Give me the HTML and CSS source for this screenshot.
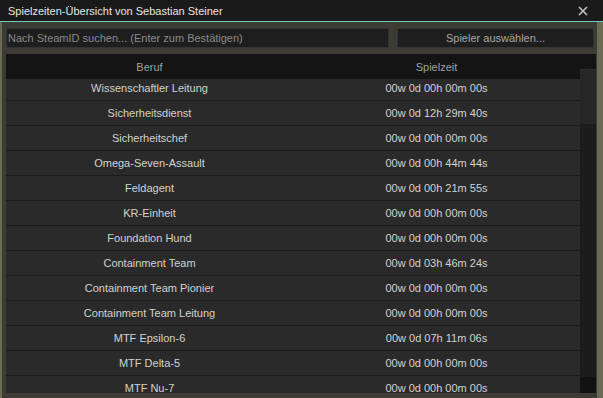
FILE: index.html
```html
<!DOCTYPE html>
<html lang="de">
<head>
  <meta charset="UTF-8" />
  <meta name="viewport" content="width=device-width, initial-scale=1.0" />
  <title>Spielzeiten-Übersicht</title>
  <link rel="stylesheet" href="styles.css">
</head>
<body>

  <div class="titlebar">
    <span class="title">Spielzeiten-Übersicht von Sebastian Steiner</span>
    <svg class="close" width="10" height="10" viewBox="0 0 10 10">
      <path d="M1 1 L9 9 M9 1 L1 9" stroke="#bdbdbd" stroke-width="1.7" />
    </svg>
  </div>

  <div class="panel">
    <div class="toolbar">
      <input class="search" type="text" placeholder="Nach SteamID suchen... (Enter zum Bestätigen)" />
      <button class="pick">Spieler auswählen...</button>
    </div>

    <div class="list">
      <div class="list-head">
        <div class="col">Beruf</div>
        <div class="col">Spielzeit</div>
      </div>
      <div class="list-body">
        <div class="rows">
          <div class="row"><div class="col">Wissenschaftler Leitung</div><div class="col">00w 0d 00h 00m 00s</div></div>
          <div class="row"><div class="col">Sicherheitsdienst</div><div class="col">00w 0d 12h 29m 40s</div></div>
          <div class="row"><div class="col">Sicherheitschef</div><div class="col">00w 0d 00h 00m 00s</div></div>
          <div class="row"><div class="col">Omega-Seven-Assault</div><div class="col">00w 0d 00h 44m 44s</div></div>
          <div class="row"><div class="col">Feldagent</div><div class="col">00w 0d 00h 21m 55s</div></div>
          <div class="row"><div class="col">KR-Einheit</div><div class="col">00w 0d 00h 00m 00s</div></div>
          <div class="row"><div class="col">Foundation Hund</div><div class="col">00w 0d 00h 00m 00s</div></div>
          <div class="row"><div class="col">Containment Team</div><div class="col">00w 0d 03h 46m 24s</div></div>
          <div class="row"><div class="col">Containment Team Pionier</div><div class="col">00w 0d 00h 00m 00s</div></div>
          <div class="row"><div class="col">Containment Team Leitung</div><div class="col">00w 0d 00h 00m 00s</div></div>
          <div class="row"><div class="col">MTF Epsilon-6</div><div class="col">00w 0d 07h 11m 06s</div></div>
          <div class="row"><div class="col">MTF Delta-5</div><div class="col">00w 0d 00h 00m 00s</div></div>
          <div class="row"><div class="col">MTF Nu-7</div><div class="col">00w 0d 00h 00m 00s</div></div>
        </div>
        <div class="scrollbar">
          <div class="grip"></div>
          <div class="track"></div>
          <div class="down"></div>
        </div>
      </div>
    </div>
  </div>

</body>
</html>
```

FILE: styles.css
```css
html, body {
  height: 100%;
}

body {
  margin: 0;
  font-family: 'Liberation Sans', Arial, sans-serif;
  font-size: 11px;
  background-color: #6c6a55;
  display: flex;
  flex-direction: column;
  overflow: hidden;
}

.titlebar {
  height: 21px;
  background-color: #1a1a1a;
  border-bottom: 1px solid #74c9b8;
  display: flex;
  align-items: center;
  justify-content: space-between;
  padding: 0 15px 0 8px;
  color: #e6e6e6;
}

.close {
  display: block;
}

.panel {
  flex: 1;
  margin: 0 6px 0 2px;
  background-color: #3c3c34;
  padding: 6px 1px 5px 4px;
  display: flex;
  flex-direction: column;
  min-height: 0;
}

.toolbar {
  display: flex;
  gap: 8px;
  margin-right: 2px;
  height: 20px;
}

.search,
.pick {
  box-sizing: border-box;
  height: 20px;
  margin: 0;
  border: 1px solid #343431;
  background-color: #1e1e1e;
  font-family: 'Liberation Sans', Arial, sans-serif;
  font-size: 11px;
  outline: none;
}

.search {
  width: 383px;
  padding: 0 1px;
  color: #8c8c8c;
}

.search::placeholder {
  color: #8a8a8a;
}

.pick {
  flex: 1;
  color: #a8a8a8;
  padding: 0;
}

.list {
  flex: 1;
  margin-top: 6px;
  display: flex;
  flex-direction: column;
  min-height: 0;
}

.list-head {
  height: 25px;
  background-color: #141414;
  color: #a0a0a0;
  display: flex;
  align-items: center;
  padding-right: 16px;
  flex-shrink: 0;
}

.col {
  flex: 1;
  text-align: center;
}

.list-body {
  flex: 1;
  display: flex;
  min-height: 0;
}

.rows {
  flex: 1;
  overflow: hidden;
}

.row {
  height: 24px;
  border-bottom: 1px solid #1b1b1b;
  background-color: #2a2a2a;
  color: #d2d2d2;
  display: flex;
  align-items: center;
  padding-bottom: 1px;
  box-sizing: border-box;
  height: 25px;
}

.row:first-child {
  margin-top: -3px;
}

.scrollbar {
  width: 16px;
  margin-top: -10px;
  display: flex;
  flex-direction: column;
  background-color: #1c1c1c;
  position: relative;
}

.grip {
  height: 54px;
  background-color: #262626;
  border-top: 1px solid #2e2e2e;
}

.track {
  flex: 1;
}

.down {
  height: 16px;
  background-color: #121212;
}
```
